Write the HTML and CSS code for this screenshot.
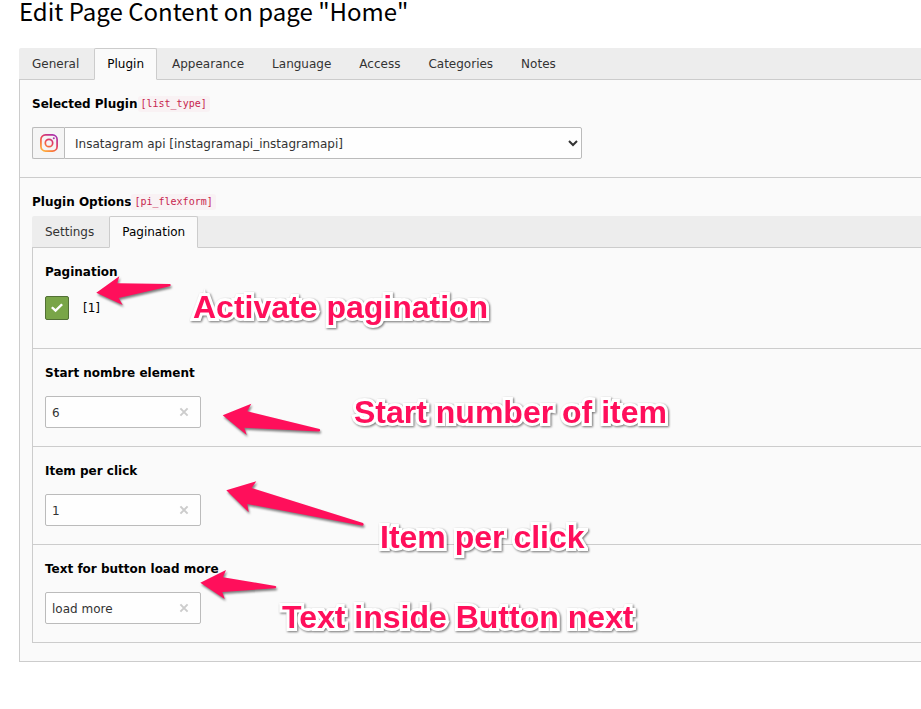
FILE: index.html
```html
<!DOCTYPE html>
<html lang="en">
<head>
<meta charset="utf-8">
<meta name="viewport" content="width=device-width, initial-scale=1">
<title>Edit Page Content on page "Home"</title>
<link rel="stylesheet" href="styles.css">
</head>
<body>
<main class="module">
  <h1 class="title">Edit Page Content on page "Home"</h1>

  <nav class="tabs" aria-label="Record sections">
    <button class="tab" type="button">General</button>
    <button class="tab tab-active" type="button">Plugin</button>
    <button class="tab" type="button">Appearance</button>
    <button class="tab" type="button">Language</button>
    <button class="tab" type="button">Access</button>
    <button class="tab" type="button">Categories</button>
    <button class="tab" type="button">Notes</button>
  </nav>

  <form class="panel">
    <section class="field">
      <div class="label-row">
        <label class="label" for="list-type">Selected Plugin</label>
        <code class="code">[list_type]</code>
      </div>
      <div class="select-group">
        <span class="select-icon">
          <svg width="18" height="18" viewBox="0 0 18 18" fill="none" aria-hidden="true">
            <defs>
              <linearGradient id="insta" x1="2" y1="18" x2="15" y2="0" gradientUnits="userSpaceOnUse">
                <stop offset="0" stop-color="#ffc040"/>
                <stop offset="0.3" stop-color="#fb7a35"/>
                <stop offset="0.6" stop-color="#e23a62"/>
                <stop offset="1" stop-color="#a02fb8"/>
              </linearGradient>
            </defs>
            <rect x="0.9" y="0.9" width="16.2" height="16.2" rx="4.6" stroke="url(#insta)" stroke-width="1.7"/>
            <circle cx="9" cy="9" r="3.7" stroke="url(#insta)" stroke-width="1.7"/>
            <circle cx="13.8" cy="4.2" r="1" fill="#b034a4"/>
          </svg>
        </span>
        <select class="select" id="list-type">
          <option>Insatagram api [instagramapi_instagramapi]</option>
        </select>
      </div>
    </section>

    <section class="field field-nested">
      <div class="label-row">
        <span class="label">Plugin Options</span>
        <code class="code">[pi_flexform]</code>
      </div>
      <nav class="tabs" aria-label="Plugin options">
        <button class="tab" type="button">Settings</button>
        <button class="tab tab-active" type="button">Pagination</button>
      </nav>

      <div class="panel">
        <section class="field">
          <div class="label-row"><span class="label">Pagination</span></div>
          <label class="check-row">
            <input class="check" type="checkbox" checked>
            <span>[1]</span>
          </label>
          <svg class="arrow arrow-pagination" width="90" height="44" viewBox="90 270 90 44" aria-hidden="true">
            <path d="M96.3 292.7 119.3 276.3 117.3 283.3 170 284 Q171.5 285 170 286.2L118.7 298 122.7 305Z"/>
          </svg>
          <span class="note note-pagination">Activate pagination</span>
        </section>

        <section class="field">
          <div class="label-row"><label class="label" for="start">Start nombre element</label></div>
          <div class="input-wrap">
            <input class="input" id="start" type="text" value="6">
            <button class="clear" type="button" aria-label="Clear start value">
              <svg width="10" height="10" viewBox="0 0 10 10"><path d="M1.4 1.4 8.6 8.6M8.6 1.4 1.4 8.6"/></svg>
            </button>
          </div>
          <svg class="arrow arrow-start" width="110" height="44" viewBox="216 398 110 44" aria-hidden="true">
            <path d="M222.7 415.3 251.3 403.7 247.3 411.3 319.5 429 Q321 430.5 319 431.5L244.3 427.7 246.7 435Z"/>
          </svg>
          <span class="note note-start">Start number of item</span>
        </section>

        <section class="field">
          <div class="label-row"><label class="label" for="per-click">Item per click</label></div>
          <div class="input-wrap">
            <input class="input" id="per-click" type="text" value="1">
            <button class="clear" type="button" aria-label="Clear item per click">
              <svg width="10" height="10" viewBox="0 0 10 10"><path d="M1.4 1.4 8.6 8.6M8.6 1.4 1.4 8.6"/></svg>
            </button>
          </div>
          <svg class="arrow arrow-click" width="150" height="56" viewBox="220 476 150 56" aria-hidden="true">
            <path d="M226.3 490.3 256.3 481.3 251.7 488 363 523 Q364.5 525 362.5 525.7L247.3 504 248.7 512.3Z"/>
          </svg>
          <span class="note note-click">Item per click</span>
        </section>

        <section class="field">
          <div class="label-row"><label class="label" for="more-text">Text for button load more</label></div>
          <div class="input-wrap">
            <input class="input" id="more-text" type="text" value="load more">
            <button class="clear" type="button" aria-label="Clear button text">
              <svg width="10" height="10" viewBox="0 0 10 10"><path d="M1.4 1.4 8.6 8.6M8.6 1.4 1.4 8.6"/></svg>
            </button>
          </div>
          <svg class="arrow arrow-text" width="90" height="44" viewBox="194 564 90 44" aria-hidden="true">
            <path d="M200.3 582.7 226 570 223 577.3 275.5 586 Q277 587 275.5 588.2L222.3 592 224.7 599Z"/>
          </svg>
          <span class="note note-text">Text inside Button next</span>
        </section>
      </div>
    </section>
  </form>
</main>
</body>
</html>
```
FILE: styles.css
```css
* {
  box-sizing: border-box;
}

body {
  margin: 0;
  background: #fff;
  color: #000;
  font-family: Verdana, "DejaVu Sans", sans-serif;
  font-size: 12px;
  line-height: 18px;
}

button,
input,
select {
  font: inherit;
}

.module {
  padding-left: 19px;
}

.title {
  margin: 0;
  padding-bottom: 26px;
  font-family: "Source Sans Pro", "Noto Sans CJK JP", sans-serif;
  font-size: 24px;
  font-weight: 400;
  line-height: 22px;
}

/* Tabs */
.tabs {
  display: flex;
  gap: 2px;
  background: #ededed;
  border-radius: 2px 0 0 0;
}

.tab {
  height: 32px;
  margin: 0 0 -1px;
  padding: 0 12px;
  border: 1px solid transparent;
  background: none;
  color: #333;
  white-space: nowrap;
}

.tab-active {
  position: relative;
  border-color: #ccc;
  border-bottom-color: #fafafa;
  border-radius: 2px 2px 0 0;
  background: #fafafa;
  color: #000;
}

/* Panels and fields */
.panel {
  border: 1px solid #ccc;
  border-right: 0;
  background: #fafafa;
}

.field {
  position: relative;
  padding: 15px 12px 18px;
}

.field + .field {
  border-top: 1px solid #ccc;
}

.field-nested {
  padding-right: 0;
}

.label-row {
  display: flex;
  align-items: center;
  margin-bottom: 14px;
}

.field-nested > .label-row {
  margin-bottom: 5px;
}

.label {
  font-weight: 700;
}

.code {
  padding: 0 3px;
  border-radius: 3px;
  background: #f9f2f4;
  color: #c7254e;
  font-family: Consolas, "DejaVu Sans Mono", monospace;
  font-size: 10px;
  line-height: 16px;
}

/* Controls */
.select-group {
  display: flex;
  max-width: 550px;
  height: 32px;
}

.select-icon {
  display: flex;
  align-items: center;
  justify-content: center;
  width: 32px;
  border: 1px solid #bbb;
  border-right: 0;
  border-radius: 2px 0 0 2px;
  background: #f5f5f5;
}

.select {
  flex: 1;
  min-width: 0;
  padding: 1px 5px 0 6px;
  border: 1px solid #bbb;
  border-radius: 0 2px 2px 0;
  background-color: #fefefe;
  color: #333;
}

.input-wrap {
  position: relative;
  width: 156px;
}

.input {
  display: block;
  width: 100%;
  height: 32px;
  padding: 1px 30px 0 6px;
  border: 1px solid #bbb;
  border-radius: 2px;
  background: #fefefe;
  color: #333;
}

.clear {
  position: absolute;
  top: 8px;
  right: 9px;
  display: flex;
  align-items: center;
  justify-content: center;
  width: 16px;
  height: 16px;
  padding: 0;
  border: 0;
  background: none;
}

.clear path {
  stroke: #ccc;
  stroke-width: 2;
}

.check-row {
  display: flex;
  align-items: center;
  gap: 14px;
  padding: 1px 0 10px;
}

.check {
  display: grid;
  place-items: center;
  width: 24px;
  height: 24px;
  margin: 0;
  border: 1px solid #527035;
  border-radius: 2px;
  background: #79a548;
  appearance: none;
}

.check::before {
  content: "";
  width: 12px;
  height: 10px;
  background: #fff;
  clip-path: polygon(0 50%, 14% 34%, 38% 60%, 85% 4%, 100% 20%, 38% 92%);
}

/* Callouts drawn over the form */
.arrow,
.note {
  position: absolute;
  z-index: 2;
  pointer-events: none;
}

.arrow {
  fill: #ff0f5b;
  filter: drop-shadow(1px 2px 1px rgba(0, 0, 0, 0.5));
}

.note {
  color: #ff0f5b;
  font-family: Arial, "Liberation Sans", sans-serif;
  font-size: 32px;
  font-weight: 700;
  line-height: 36px;
  white-space: nowrap;
  -webkit-text-stroke: 6px #fff;
  paint-order: stroke fill;
  filter: drop-shadow(1px 1px 1px rgba(0, 0, 0, 0.55));
}

.arrow-pagination { left: 57px; top: 22px; }
.note-pagination { left: 160px; top: 41px; }
.arrow-start { left: 183px; top: 49px; }
.note-start { left: 321px; top: 45px; }
.arrow-click { left: 187px; top: 29px; }
.note-click { left: 347px; top: 72px; }
.arrow-text { left: 161px; top: 19px; }
.note-text { left: 249px; top: 54px; }
```
